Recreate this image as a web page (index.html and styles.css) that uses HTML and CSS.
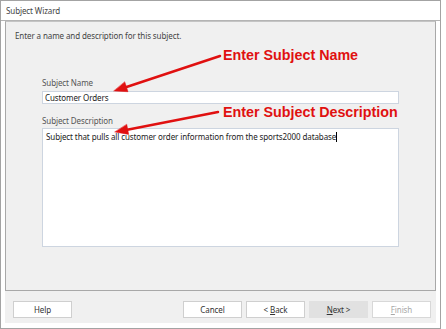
FILE: index.html
```html
<!DOCTYPE html>
<html lang="en">
<head>
    <meta charset="UTF-8">
    <title>Subject Wizard</title>
    <link rel="stylesheet" href="styles.css">
</head>
<body>
    <div class="window">
        <div class="titlebar">Subject Wizard</div>
        <div class="content">
            <div class="panel">
                <p class="intro">Enter a name and description for this subject.</p>
                <div class="form">
                    <label class="label">Subject Name</label>
                    <div class="textbox">Customer Orders</div>
                    <label class="label label-desc">Subject Description</label>
                    <div class="textarea">Subject that pulls all customer order information from the sports2000 database<span class="caret"></span></div>
                </div>
            </div>
            <div class="buttonbar">
                <button class="btn">Help</button>
                <div class="nav">
                    <button class="btn">Cancel</button>
                    <button class="btn">&lt; <u>B</u>ack</button>
                    <button class="btn btn-default"><u>N</u>ext &gt;</button>
                    <button class="btn" disabled><u>F</u>inish</button>
                </div>
            </div>
        </div>
    </div>

    <!-- red callouts drawn over the screenshot -->
    <div class="callout callout-name">Enter Subject Name</div>
    <div class="callout callout-desc">Enter Subject Description</div>
    <svg class="arrows" width="446" height="329" viewBox="0 0 446 329">
        <g fill="#e01010" stroke="#e01010" stroke-linecap="round">
            <line x1="220" y1="56" x2="125" y2="87.5" stroke-width="2.5"/>
            <polygon points="114,91 128,91.7 124.8,82.1" stroke-width="0.5"/>
            <line x1="218" y1="112" x2="126" y2="130" stroke-width="2.5"/>
            <polygon points="115,132 128.7,134.4 126.8,124.6" stroke-width="0.5"/>
        </g>
    </svg>
</body>
</html>
```

FILE: styles.css
```css
* {
    margin: 0;
    padding: 0;
    box-sizing: border-box;
}

body {
    width: 446px;
    height: 329px;
    background: #ffffff;
    font-family: 'Noto Sans', 'Open Sans', sans-serif;
    font-size: 8px;
    letter-spacing: -0.1px;
    color: #333;
    position: relative;
    overflow: hidden;
}

.window {
    width: 441px;
    height: 329px;
    border: 1px solid #a3a3a3;
    background: #ffffff;
    display: flex;
    flex-direction: column;
}

.titlebar {
    height: 20px;
    line-height: 19px;
    padding-left: 5px;
    border-bottom: 1px solid #b4b4b4;
    color: #444;
}

.content {
    padding: 0 4px;
    display: flex;
    flex-direction: column;
}

.panel {
    height: 270px;
    background: #f0f0f0;
    border: 1px solid #a8a8a8;
    border-top-color: #c4c4c4;
    padding: 8px 0 0 9px;
}

.intro {
    line-height: 12px;
    color: #444;
}

.form {
    margin: 35px 0 0 27px;
    width: 357px;
    display: flex;
    flex-direction: column;
}

.label {
    line-height: 12px;
    color: #555;
    margin-bottom: 2px;
}

.label-desc {
    margin-top: 11px;
    margin-bottom: 1px;
}

.textbox {
    height: 13px;
    line-height: 11px;
    background: #ffffff;
    border: 1px solid #cdd5e0;
    padding-left: 2px;
    color: #222;
}

.textarea {
    height: 119px;
    line-height: 11px;
    background: #ffffff;
    border: 1px solid #cdd5e0;
    padding: 2px 3px;
    color: #222;
}

.caret {
    display: inline-block;
    width: 1px;
    height: 10px;
    background: #000;
    vertical-align: -2px;
}

.buttonbar {
    height: 32px;
    background: #f0f0f0;
    padding: 10px 5px 0 8px;
    display: flex;
    justify-content: space-between;
    align-items: flex-start;
}

.nav {
    display: flex;
    gap: 4px;
}

.btn {
    width: 59px;
    height: 17px;
    background: #ffffff;
    border: 1px solid #cfcfcf;
    font-family: inherit;
    font-size: 8px;
    letter-spacing: -0.1px;
    color: #333;
}

.btn-default {
    background: #e1e1e1;
    border-color: #e1e1e1;
}

.btn:disabled {
    color: #a8a8a8;
    border-color: #d8d8d8;
}

.callout {
    position: absolute;
    left: 223px;
    font-family: 'Liberation Sans', Arial, sans-serif;
    font-weight: bold;
    font-size: 14.3px;
    letter-spacing: 0;
    line-height: 16px;
    color: #e01010;
}

.callout-name {
    top: 47px;
}

.callout-desc {
    top: 104px;
}

.arrows {
    position: absolute;
    top: 0;
    left: 0;
}
```
